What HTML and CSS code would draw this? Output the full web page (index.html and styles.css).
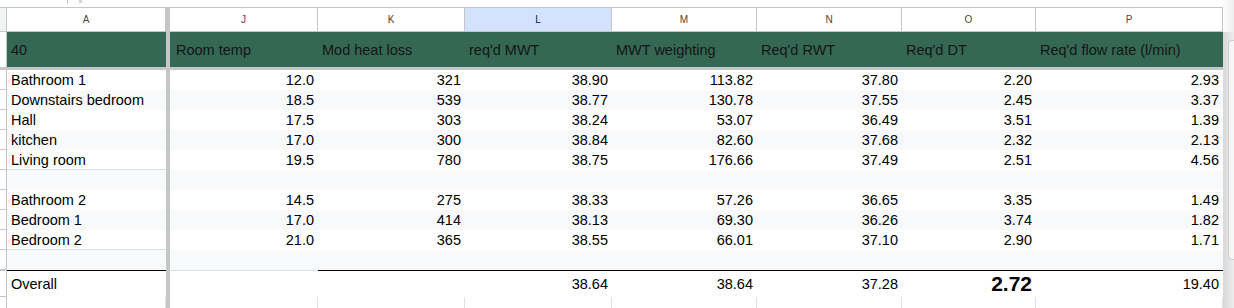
FILE: index.html
```html
<!DOCTYPE html>
<html>
<head>
<meta charset="utf-8">
<link rel="stylesheet" href="styles.css">
</head>
<body>
<div class="sheet">
  <div class="main">
    <div class="topstrip"><span class="tick"></span><span class="dot"></span></div>
    <div class="row colhead">
      <div class="rh"></div>
      <div class="ch">A</div>
      <div class="sep"></div>
      <div class="ch">J</div>
      <div class="ch">K</div>
      <div class="ch sel">L</div>
      <div class="ch">M</div>
      <div class="ch">N</div>
      <div class="ch">O</div>
      <div class="ch">P</div>
    </div>
    <div class="row band">
      <div class="rh"></div>
      <div class="c">40</div>
      <div class="sep"></div>
      <div class="c first">Room temp</div>
      <div class="c">Mod heat loss</div>
      <div class="c">req'd MWT</div>
      <div class="c">MWT weighting</div>
      <div class="c">Req'd RWT</div>
      <div class="c">Req'd DT</div>
      <div class="c">Req'd flow rate (l/min)</div>
    </div>
    <div class="freeze"></div>
    <div class="row drow">
      <div class="rh"></div><div class="c">Bathroom 1</div><div class="sep"></div>
      <div class="c num">12.0</div><div class="c num">321</div><div class="c num">38.90</div><div class="c num">113.82</div><div class="c num">37.80</div><div class="c num">2.20</div><div class="c num">2.93</div>
    </div>
    <div class="row drow alt">
      <div class="rh"></div><div class="c">Downstairs bedroom</div><div class="sep"></div>
      <div class="c num">18.5</div><div class="c num">539</div><div class="c num">38.77</div><div class="c num">130.78</div><div class="c num">37.55</div><div class="c num">2.45</div><div class="c num">3.37</div>
    </div>
    <div class="row drow">
      <div class="rh"></div><div class="c">Hall</div><div class="sep"></div>
      <div class="c num">17.5</div><div class="c num">303</div><div class="c num">38.24</div><div class="c num">53.07</div><div class="c num">36.49</div><div class="c num">3.51</div><div class="c num">1.39</div>
    </div>
    <div class="row drow alt">
      <div class="rh"></div><div class="c">kitchen</div><div class="sep"></div>
      <div class="c num">17.0</div><div class="c num">300</div><div class="c num">38.84</div><div class="c num">82.60</div><div class="c num">37.68</div><div class="c num">2.32</div><div class="c num">2.13</div>
    </div>
    <div class="row drow">
      <div class="rh"></div><div class="c bb">Living room</div><div class="sep"></div>
      <div class="c num">19.5</div><div class="c num">780</div><div class="c num">38.75</div><div class="c num">176.66</div><div class="c num">37.49</div><div class="c num">2.51</div><div class="c num">4.56</div>
    </div>
    <div class="row drow alt">
      <div class="rh"></div><div class="c"></div><div class="sep"></div>
      <div class="c"></div><div class="c"></div><div class="c"></div><div class="c"></div><div class="c"></div><div class="c"></div><div class="c"></div>
    </div>
    <div class="row drow">
      <div class="rh"></div><div class="c">Bathroom 2</div><div class="sep"></div>
      <div class="c num">14.5</div><div class="c num">275</div><div class="c num">38.33</div><div class="c num">57.26</div><div class="c num">36.65</div><div class="c num">3.35</div><div class="c num">1.49</div>
    </div>
    <div class="row drow alt">
      <div class="rh"></div><div class="c">Bedroom 1</div><div class="sep"></div>
      <div class="c num">17.0</div><div class="c num">414</div><div class="c num">38.13</div><div class="c num">69.30</div><div class="c num">36.26</div><div class="c num">3.74</div><div class="c num">1.82</div>
    </div>
    <div class="row drow">
      <div class="rh"></div><div class="c bb">Bedroom 2</div><div class="sep"></div>
      <div class="c num">21.0</div><div class="c num">365</div><div class="c num">38.55</div><div class="c num">66.01</div><div class="c num">37.10</div><div class="c num">2.90</div><div class="c num">1.71</div>
    </div>
    <div class="row drow alt">
      <div class="rh"></div><div class="c"></div><div class="sep"></div>
      <div class="c"></div><div class="c"></div><div class="c"></div><div class="c"></div><div class="c"></div><div class="c"></div><div class="c"></div>
    </div>
    <div class="row total">
      <div class="rh"></div><div class="c">Overall</div><div class="sep"></div>
      <div class="c light"></div><div class="c"></div><div class="c num">38.64</div><div class="c num">38.64</div><div class="c num">37.28</div><div class="c num big">2.72</div><div class="c num">19.40</div>
    </div>
    <div class="row tail">
      <div class="rh"></div><div class="g"></div><div class="sep"></div>
      <div class="g"></div><div class="g"></div><div class="g"></div><div class="g"></div><div class="g"></div><div class="g"></div><div class="g"></div>
    </div>
  </div>
  <div class="vscroll">
    <div class="vs-top"></div>
    <div class="vs-track"><div class="thumb"></div></div>
  </div>
</div>
</body>
</html>
```

FILE: styles.css
```css
* { box-sizing: border-box; }
html, body {
  margin: 0;
  padding: 0;
  background: #ffffff;
}
body {
  width: 1234px;
  height: 308px;
  overflow: hidden;
  font-family: "Liberation Sans", Arial, sans-serif;
}
.sheet {
  display: flex;
  height: 308px;
}
.main {
  width: 1223px;
  display: flex;
  flex-direction: column;
}
.topstrip {
  height: 8px;
  border-bottom: 1px solid #c4c7c5;
  display: flex;
  align-items: flex-start;
}
.tick {
  margin-left: 67px;
  width: 1px;
  height: 4px;
  background: #c4c7c5;
}
.dot {
  margin-left: 11px;
  width: 3px;
  height: 3px;
  background: #d2d2d2;
}
.row {
  display: grid;
  grid-template-columns: 7px 159px 4px 148px 147px 147px 145px 145px 134px 187px;
}
.sep { background: #c4c7c5; }
.rh {
  background: #ffffff;
  border-right: 1px solid #c4c7c5;
}
.colhead {
  height: 24px;
  border-bottom: 1px solid #c4c7c5;
}
.colhead .rh { background: #f1f3f4; }
.ch {
  display: flex;
  align-items: center;
  justify-content: center;
  font-size: 10px;
  color: #444746;
  border-right: 1px solid #c4c7c5;
  background: #ffffff;
}
.ch.sel {
  background: #d3e3fd;
  color: #041e49;
}
.band { height: 35px; }
.band .c {
  background: #346854;
  color: #141414;
}
.band .first { padding-left: 6px; }
.freeze {
  height: 3px;
  background: #c4c7c5;
}
.c {
  display: flex;
  align-items: center;
  padding: 0 4px;
  font-size: 14.5px;
  color: #000000;
  white-space: nowrap;
  overflow: hidden;
  background: #ffffff;
}
.num { justify-content: flex-end; }
.drow { height: 20px; }
.drow .rh { border-bottom: 1px solid #c4c7c5; }
.drow.alt .c { background: #f8f9fa; }
.c.bb { border-bottom: 1px solid #dadce0; }
.total { height: 27px; }
.total .c { border-top: 1px solid #000000; }
.total .c.light { border-top-color: #dadce0; }
.total .rh { border-top: 1px solid #c4c7c5; border-bottom: 1px solid #c4c7c5; }
.big {
  font-weight: bold;
  font-size: 21px;
}
.tail { flex: 1; }
.g { border-right: 1px solid #e1e3e1; }
.vscroll {
  width: 11px;
  display: flex;
  flex-direction: column;
}
.vs-top {
  height: 32px;
  background: linear-gradient(to right, #ffffff, #eeeeee);
}
.vs-track {
  flex: 1;
  background: linear-gradient(to right, #d9d9d9, #ececec);
  padding-top: 8px;
  display: flex;
  justify-content: flex-end;
}
.thumb {
  width: 6px;
  height: 220px;
  background: #f6f6f6;
  border: 1px solid #cfcfcf;
  border-right: 0;
  border-radius: 4px 0 0 4px;
}
```
